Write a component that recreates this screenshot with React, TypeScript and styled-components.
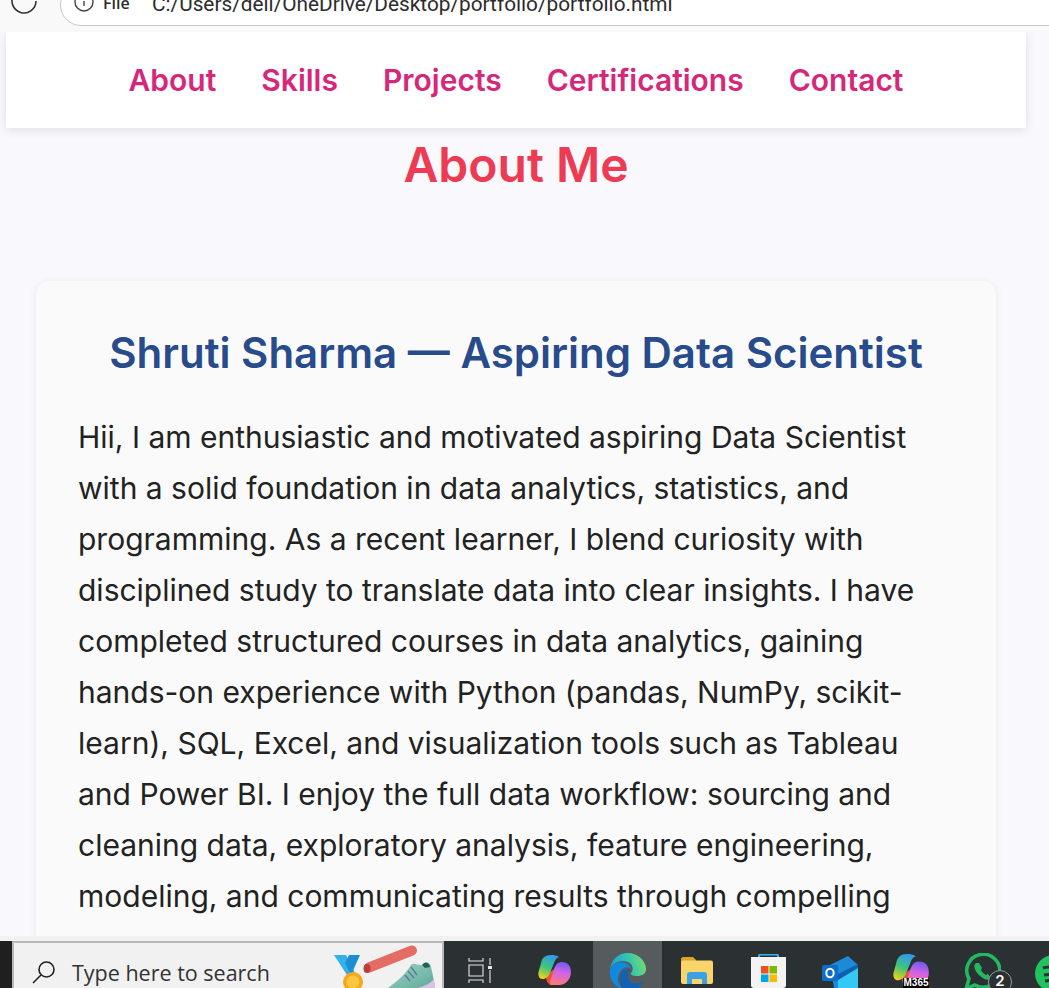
import styled, { createGlobalStyle } from "styled-components";

const GlobalStyle = createGlobalStyle`
  html, body {
    margin: 0;
    padding: 0;
    height: 100%;
    overflow: hidden;
    background: #f8f8fd;
  }
  #root {
    height: 100%;
  }
`;

const Screen = styled.div`
  height: 988px;
  display: flex;
  flex-direction: column;
  overflow: hidden;
  font-family: Inter, "Liberation Sans", sans-serif;
`;

const BrowserBar = styled.header`
  height: 32px;
  flex: none;
  display: flex;
  align-items: flex-end;
  background: #f9f9f9;
  overflow: hidden;
`;

const ReloadIcon = styled.svg`
  width: 26px;
  height: 26px;
  margin: 0 0 18px 11px;
  flex: none;
`;

const AddressBar = styled.div`
  width: 1100px;
  height: 42px;
  margin: 0 0 6px 23px;
  flex: none;
  display: flex;
  align-items: flex-end;
  padding: 0 0 13px 13px;
  box-sizing: border-box;
  background: #fff;
  border: 1px solid #c9c9c9;
  border-radius: 22px;
  color: #2c2c2c;
`;

const SiteLabel = styled.span`
  width: 49px;
  margin: 0 0 0 9px;
  font-family: "Open Sans", sans-serif;
  font-size: 16px;
  font-weight: 600;
  line-height: 18px;
`;

const Url = styled.span`
  margin-bottom: -4px;
  font-family: Roboto, sans-serif;
  font-size: 20.8px;
  line-height: 24px;
`;

const Main = styled.main`
  flex: 1;
  min-height: 0;
  overflow: hidden;
  padding: 0 23px 0 6px;
  border-bottom: 5px solid #f2f2f2;
`;

const Nav = styled.nav`
  height: 96px;
  display: flex;
  justify-content: center;
  align-items: center;
  gap: 45px;
  background: #fff;
  box-shadow: 0 2px 10px rgba(0, 0, 0, 0.1);
`;

const NavLink = styled.a`
  color: #d6287a;
  font-size: 30px;
  font-weight: 600;
  line-height: 36px;
`;

const PageTitle = styled.h1`
  margin: 6px 0 0;
  color: #ee3b54;
  font-size: 48px;
  font-weight: 600;
  line-height: 62px;
  text-align: center;
`;

const Card = styled.section`
  margin: 85px 30px 0;
  padding: 43px 43px 0;
  height: 800px;
  background: #fafafa;
  border-radius: 14px;
  box-shadow: 0 0 8px rgba(0, 0, 0, 0.05);
`;

const Name = styled.h2`
  margin: 0 0 30px;
  color: #284b8c;
  font-size: 42px;
  font-weight: 600;
  line-height: 58px;
  text-align: center;
`;

const Bio = styled.p`
  margin: 0 0 0 -1px;
  color: #222;
  font-size: 30px;
  line-height: 51px;
`;

const Taskbar = styled.footer`
  height: 47px;
  flex: none;
  display: flex;
  align-items: stretch;
  background: #2b3033;
  overflow: hidden;
`;

const DarkEdge = styled.div`
  width: 12px;
  flex: none;
  background: #1f1f1f;
`;

const SearchBox = styled.div`
  width: 432px;
  flex: none;
  display: flex;
  align-items: flex-start;
  padding: 16px 0 0 17px;
  box-sizing: border-box;
  position: relative;
  background: #f1f1f1;
  border: 2px solid #b8b8b8;
  border-bottom: none;
  color: #333;
  font-family: "Open Sans", sans-serif;
  font-size: 21.5px;
  line-height: 28px;
`;

const SearchText = styled.span`
  margin-left: 15px;
`;

const SearchArt = styled.svg`
  position: absolute;
  top: -2px;
  right: 1px;
`;

const Tray = styled.div`
  display: flex;
  flex: 1;
  align-items: flex-start;
`;

const TraySlot = styled.div<{ $width: number; $top: number; $active?: boolean }>`
  position: relative;
  width: ${(p) => p.$width}px;
  height: 47px;
  flex: none;
  display: flex;
  justify-content: center;
  padding-top: ${(p) => p.$top}px;
  box-sizing: border-box;
  background: ${(p) => (p.$active ? "#565b5e" : "transparent")};

  svg {
    flex: none;
  }
`;

const CountBadge = styled.span`
  position: absolute;
  top: 29px;
  left: 40px;
  width: 24px;
  height: 24px;
  box-sizing: border-box;
  border-radius: 50%;
  background: #2b3033;
  border: 1px solid #9a9a9a;
  color: #fff;
  font-size: 15px;
  font-weight: 600;
  line-height: 20px;
  text-align: center;
`;

const AppLabel = styled.span`
  position: absolute;
  top: 37px;
  left: 29px;
  width: 26px;
  height: 10px;
  background: #000;
  color: #fff;
  font-family: "Liberation Sans", sans-serif;
  font-size: 10px;
  font-weight: 700;
  line-height: 10px;
  text-align: center;
`;

const bioText =
  "Hii, I am enthusiastic and motivated aspiring Data Scientist with a solid foundation in data analytics, statistics, and programming. As a recent learner, I blend curiosity with disciplined study to translate data into clear insights. I have completed structured courses in data analytics, gaining hands-on experience with Python (pandas, NumPy, scikit-learn), SQL, Excel, and visualization tools such as Tableau and Power BI. I enjoy the full data workflow: sourcing and cleaning data, exploratory analysis, feature engineering, modeling, and communicating results through compelling";

const navItems = ["About", "Skills", "Projects", "Certifications", "Contact"];

const CopilotIcon = ({ id, width }: { id: string; width: number }) => (
  <svg width={width} height={width * 0.88} viewBox="0 0 34 30">
    <defs>
      <linearGradient id={`${id}A`} x1="0.6" y1="0" x2="0.2" y2="1">
        <stop offset="0" stopColor="#2f9bee" />
        <stop offset="0.5" stopColor="#3cc47c" />
        <stop offset="1" stopColor="#f7d117" />
      </linearGradient>
      <linearGradient id={`${id}B`} x1="0.6" y1="0" x2="0.4" y2="1">
        <stop offset="0" stopColor="#6d5cf0" />
        <stop offset="0.45" stopColor="#d562e4" />
        <stop offset="1" stopColor="#fb7a7a" />
      </linearGradient>
    </defs>
    <path d="M24 7c-4 0-6 2-8 7l-5 12c-1 2 0 4 3 4h7c7 0 12-6 12-13 0-6-3-10-9-10z" fill={`url(#${id}B)`} />
    <path d="M8 22c2-3 5-6 8-8l-4 13c0 2 1 3 3 3-4 0-7-3-7-8z" fill="#ee5230" />
    <path d="M13 0C7 0 4 3 3 8L.5 17C-.5 22 2 25 6 24c3-1 5-3 6-6l4-10c1-3 2-5 5-6-2-1.500-5-2-8-2z" fill={`url(#${id}A)`} />
  </svg>
);

const App = () => (
  <>
    <GlobalStyle />
    <Screen>
      <BrowserBar>
        <ReloadIcon viewBox="0 0 26 26" fill="none" stroke="#333" strokeWidth="1.6">
          <path d="M22 5A12 12 0 1 0 25 13" />
        </ReloadIcon>
        <AddressBar>
          <svg width="20" height="20" viewBox="0 0 20 20" fill="none" stroke="#444" strokeWidth="1.4">
            <circle cx="10" cy="10" r="9" />
            <path d="M10 9v5M10 6v1.400" />
          </svg>
          <SiteLabel>File</SiteLabel>
          <Url>C:/Users/dell/OneDrive/Desktop/portfolio/portfolio.html</Url>
        </AddressBar>
      </BrowserBar>
      <Main>
        <Nav>
          {navItems.map((item) => (
            <NavLink key={item}>{item}</NavLink>
          ))}
        </Nav>
        <PageTitle>About Me</PageTitle>
        <Card>
          <Name>Shruti Sharma — Aspiring Data Scientist</Name>
          <Bio>{bioText}</Bio>
        </Card>
      </Main>
      <Taskbar>
        <DarkEdge />
        <SearchBox>
          <svg width="26" height="26" viewBox="0 0 26 26" fill="none" stroke="#222" strokeWidth="1.6">
            <circle cx="15.500" cy="10.500" r="7.500" />
            <path d="M10 16 2 24" />
          </svg>
          <SearchText>Type here to search</SearchText>
          <SearchArt width="115" height="47" viewBox="0 0 115 47">
            <defs>
              <linearGradient id="shoeFill" x1="0" y1="0" x2="1" y2="1">
                <stop offset="0" stopColor="#9fd4c6" />
                <stop offset="1" stopColor="#5fa898" />
              </linearGradient>
            </defs>
            <path d="M8 14h12l10 20h-9z" fill="#31b2e8" />
            <path d="M34 14H23l-4 8 6 12z" fill="#1a8fd4" />
            <circle cx="27" cy="41" r="10" fill="#f5a81c" />
            <circle cx="27" cy="41" r="6.500" fill="#fbc63f" />
            <path d="M43 26.500 86 9.500" stroke="#e56c64" strokeWidth="10" strokeLinecap="round" />
            <ellipse cx="41" cy="27.500" rx="3.500" ry="4.500" fill="#b8403c" />
            <path d="M62 47c10-7 18-15 23-23 3-3 7 1 12 0 3-4 7-3 8 2 2 8 3 14 4 21z" fill="url(#shoeFill)" />
            <path d="M85 26l6 8M82 30l6 7M79 34l5 6" stroke="#5c7f96" strokeWidth="1.500" />
            <path d="M96 24c3-4 7-3 8 2l-5 1z" fill="#245f5a" />
            <path d="M92 47c6-2 12-4 16-9l1 9z" fill="#d8c4e2" />
          </SearchArt>
        </SearchBox>
        <Tray>
          <TraySlot $width={72} $top={17}>
            <svg width="24" height="25" viewBox="0 0 24 25" fill="none" stroke="#e6e6e6" strokeWidth="1.100">
              <path d="M1 0v3h14V0M1 7h14v11H1zM1 25v-3h14v3M22 0v7M22 12v13" />
              <rect x="20" y="8" width="4" height="3" fill="#e6e6e6" stroke="none" />
            </svg>
          </TraySlot>
          <TraySlot $width={77} $top={14}>
            <CopilotIcon id="copilot" width={34} />
          </TraySlot>
          <TraySlot $width={69} $top={12} $active>
            <svg width="37" height="37" viewBox="0 0 37 37">
              <defs>
                <linearGradient id="edgeTop" x1="0" y1="0.6" x2="1" y2="0.4">
                  <stop offset="0" stopColor="#1c9fd8" />
                  <stop offset="0.55" stopColor="#35c4b0" />
                  <stop offset="1" stopColor="#76dc6a" />
                </linearGradient>
              </defs>
              <path d="M1 17C2 6 10 0 19 0c10 0 18 8 18 16 0 5-4 7-9 7-4 0-7-1-6-3 3-3 2-9-3-11C11 6 3 10 1 17z" fill="url(#edgeTop)" />
              <path d="M1 17c-1 9 4 17 13 19-5-4-7-11-3-17 3-5 8-6 11-3C20 8 6 6 1 17z" fill="#0f8ae0" />
              <path d="M14 36c10 2 18-1 21-8-5 4-15 3-16-4-1-3 0-6 2-8-5 0-10 3-10 9 0 5 1 9 3 11z" fill="#1460b4" />
            </svg>
          </TraySlot>
          <TraySlot $width={70} $top={16}>
            <svg width="32" height="27" viewBox="0 0 32 27">
              <path d="M0 2c0-1 1-2 2-2h10l3 3v3H0z" fill="#dca524" />
              <rect y="3.500" width="32" height="23.500" rx="2" fill="#f9d46a" />
              <path d="M6 27v-9c0-2 1-3 3-3h14c2 0 3 1 3 3v9h-5v-5H11v5z" fill="#3aa0e8" />
            </svg>
          </TraySlot>
          <TraySlot $width={73} $top={13}>
            <svg width="35" height="34" viewBox="0 0 35 34">
              <path d="M8 6V2c0-1 1-1.500 2-1.500h15c1 0 2 .5 2 1.500v4" fill="none" stroke="#35b6e8" strokeWidth="2" />
              <path d="M0 3h35v28c0 2-1 3-3 3H3c-2 0-3-1-3-3z" fill="#f3f3f3" />
              <rect x="10" y="12" width="7.500" height="7.500" fill="#f25022" />
              <rect x="18.500" y="12" width="7.500" height="7.500" fill="#7fba00" />
              <rect x="10" y="20.500" width="7.500" height="7.500" fill="#00a4ef" />
              <rect x="18.500" y="20.500" width="7.500" height="7.500" fill="#ffb900" />
            </svg>
          </TraySlot>
          <TraySlot $width={69} $top={15}>
            <svg width="36" height="32" viewBox="0 0 36 32">
              <path d="M8 9 26 0l10 9v23H12z" fill="#1c8ad6" />
              <path d="M16 24 36 11v21H16z" fill="#35c8f5" />
              <path d="M16 18 36 8v4L16 24z" fill="#0f5fb0" />
              <rect y="9" width="16" height="16" rx="1.500" fill="#0f6cc8" />
              <ellipse cx="8" cy="17" rx="3.700" ry="4.300" fill="none" stroke="#fff" strokeWidth="2" />
            </svg>
          </TraySlot>
          <TraySlot $width={74} $top={13}>
            <CopilotIcon id="m365" width={37} />
            <AppLabel>M365</AppLabel>
          </TraySlot>
          <TraySlot $width={68} $top={12}>
            <svg width="38" height="38" viewBox="0 0 38 38" fill="none">
              <path d="M3 36l3-10a16.500 16.500 0 1 1 6 6z" stroke="#22b862" strokeWidth="3.600" strokeLinejoin="round" />
              <path d="M13 10c-3 2-2 7 3 12s10 6 12 3l-3-4-2 1c-2-1-4-3-5-5l1-2-3-5z" fill="#22b862" />
            </svg>
            <CountBadge>2</CountBadge>
          </TraySlot>
          <TraySlot $width={74} $top={14}>
            <svg width="37" height="37" viewBox="0 0 37 37">
              <circle cx="18.500" cy="18.500" r="18.500" fill="#20c35f" />
              <path d="M8 13c7-2 15-1 21 2M9 20c6-1 13-1 18 2M10 26c5-1 11-1 15 1" stroke="#2b3033" strokeWidth="3" fill="none" />
            </svg>
          </TraySlot>
        </Tray>
      </Taskbar>
    </Screen>
  </>
);

export default App;
